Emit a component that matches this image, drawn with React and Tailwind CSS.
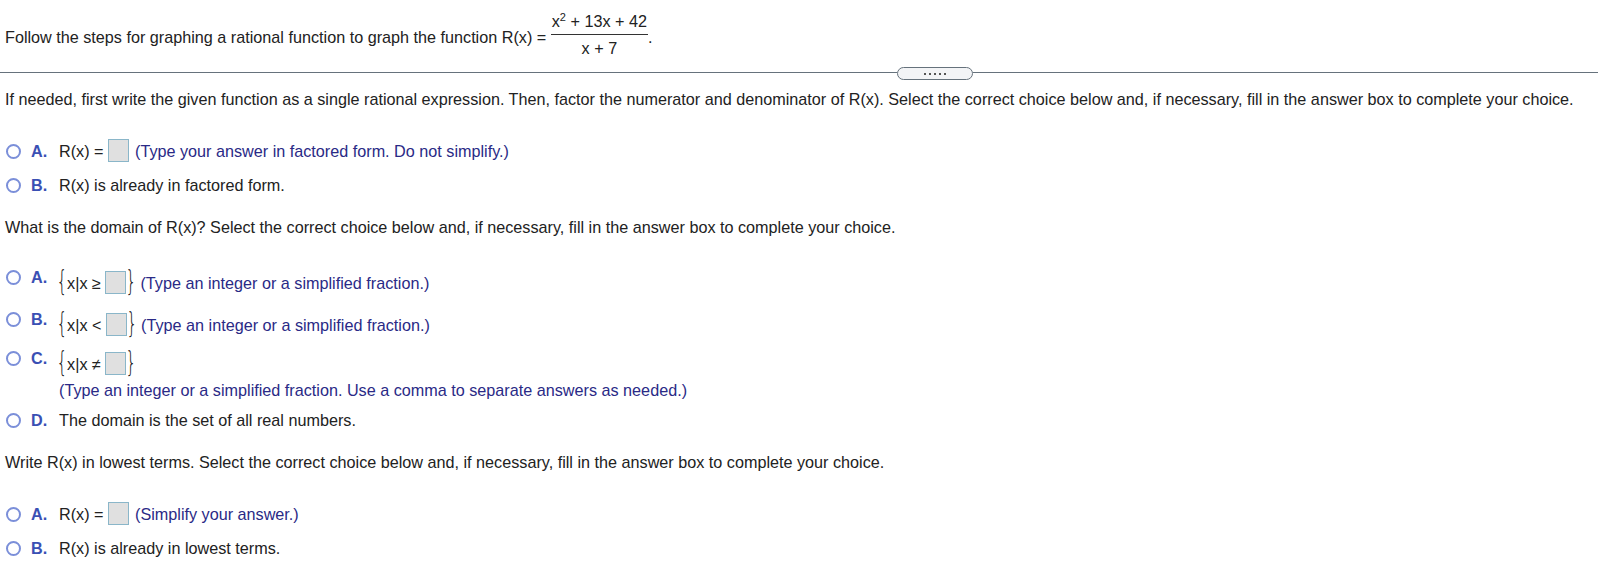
import React from 'react'

const HINT = 'text-[#2a2a86]'

function Radio({ up }) {
  return (
    <span
      className={`inline-block w-[15px] h-[15px] rounded-full border-2 border-[#7b8fd9] bg-white shrink-0 ${up ? '-translate-y-[6px]' : ''}`}
    />
  )
}

function Box() {
  return <span className="inline-block w-[21px] h-[23px] bg-[#e0e0e0] border border-[#8ab6c9] shrink-0" />
}

function Choice({ letter, up, children, className = '' }) {
  return (
    <div className={`flex items-center pl-[6px] h-[28px] ${className}`}>
      <Radio up={up} />
      <span className={`ml-[10px] w-[28px] font-bold text-[#3a50b4] shrink-0 ${up ? '-translate-y-[6px]' : ''}`}>
        {letter}
      </span>
      <div className="flex items-center">{children}</div>
    </div>
  )
}

function Brace({ children }) {
  return (
    <span className="text-[19px] leading-none -mx-[1px] scale-y-[1.45] scale-x-90 -translate-y-[1px] font-['DejaVu_Sans',sans-serif] font-extralight">
      {children}
    </span>
  )
}

function SetBrace({ op }) {
  return (
    <span className="flex items-center -ml-[2px]">
      <Brace>{'{'}</Brace>
      <span>x|x {op}&nbsp;</span>
      <Box />
      <Brace>{'}'}</Brace>
    </span>
  )
}

export default function App() {
  return (
    <div className="w-[1598px] h-[571px] bg-white text-[16.2px] text-[#222] font-['Liberation_Sans',Arial,sans-serif] overflow-hidden">
      <div className="flex items-center pl-[5px] h-[64px] pt-[10px]">
        <span>Follow the steps for graphing a rational function to graph the function R(x) =&nbsp;</span>
        <span className="inline-flex flex-col items-center -translate-y-[3px]">
          <span className="px-[1px] leading-[26px]">
            x<sup className="text-[11px]">2</sup> + 13x + 42
          </span>
          <span className="self-stretch border-t border-[#333]" />
          <span className="leading-[26px]">x + 7</span>
        </span>
        <span>.</span>
      </div>

      <div className="flex items-start h-[16px]">
        <div className="w-[897px] mt-[8px] border-t border-[#66727c]" />
        <div className="w-[76px] h-[13px] mt-[3px] rounded-full border border-[#66727c] bg-[#f3f4f6] flex items-center justify-center gap-[3px]">
          {[0, 1, 2, 3, 4].map((i) => (
            <span key={i} className="w-[2px] h-[2px] bg-[#555]" />
          ))}
        </div>
        <div className="flex-1 mt-[8px] border-t border-[#66727c]" />
      </div>

      <div className="flex items-center pl-[5px] h-[38px]">
        If needed, first write the given function as a single rational expression. Then, factor the numerator and denominator of R(x). Select the correct choice below and, if necessary, fill in the answer box to complete your choice.
      </div>

      <Choice letter="A." className="mt-[19px]">
        <span>R(x) =&nbsp;</span>
        <Box />
        <span className={`ml-[6px] ${HINT}`}>(Type your answer in factored form. Do not simplify.)</span>
      </Choice>
      <Choice letter="B." className="mt-[6px]">
        <span>R(x) is already in factored form.</span>
      </Choice>

      <div className="flex items-center pl-[5px] h-[28px] mt-[14px]">
        What is the domain of R(x)? Select the correct choice below and, if necessary, fill in the answer box to complete your choice.
      </div>

      <Choice letter="A." up className="mt-[27px] h-[30px]">
        <SetBrace op="≥" />
        <span className={`ml-[4px] ${HINT}`}>(Type an integer or a simplified fraction.)</span>
      </Choice>
      <Choice letter="B." up className="mt-[12px] h-[30px]">
        <SetBrace op="<" />
        <span className={`ml-[4px] ${HINT}`}>(Type an integer or a simplified fraction.)</span>
      </Choice>
      <Choice letter="C." up className="mt-[9px] h-[30px]">
        <SetBrace op="≠" />
      </Choice>
      <div className={`flex items-center h-[20px] mt-[1px] pl-[59px] ${HINT}`}>
        (Type an integer or a simplified fraction. Use a comma to separate answers as needed.)
      </div>
      <Choice letter="D." className="mt-[6px]">
        <span>The domain is the set of all real numbers.</span>
      </Choice>

      <div className="flex items-center pl-[5px] h-[28px] mt-[14px]">
        Write R(x) in lowest terms. Select the correct choice below and, if necessary, fill in the answer box to complete your choice.
      </div>

      <Choice letter="A." className="mt-[24px]">
        <span>R(x) =&nbsp;</span>
        <Box />
        <span className={`ml-[6px] ${HINT}`}>(Simplify your answer.)</span>
      </Choice>
      <Choice letter="B." className="mt-[6px]">
        <span>R(x) is already in lowest terms.</span>
      </Choice>
    </div>
  )
}
